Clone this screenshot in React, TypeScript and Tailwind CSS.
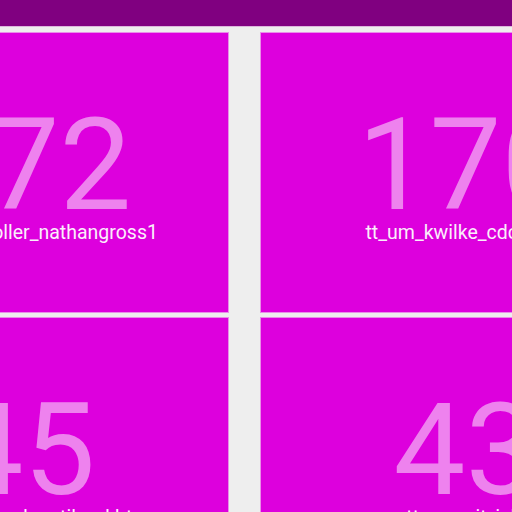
import React from "react";

const cards = [
  { n: "172", name: "tt_um_controller_nathangross1" },
  { n: "170", name: "tt_um_kwilke_cdc_fifos" },
  { n: "45", name: "tt_um_Crossbar_tiles_kbt" },
  { n: "43", name: "tt_um_pit_jelli" },
];

export default function App() {
  return (
    <div
      className="h-screen w-screen overflow-hidden bg-[#eeeeee]"
      style={{ fontFamily: "Roboto, 'Noto Sans', sans-serif" }}
    >
      <div className="h-[26px] bg-[#800080] shadow-[0_1px_0_#dcb6dc]" />
      <div className="ml-[-181px] grid w-max grid-cols-[409px_409px] gap-x-[33px] gap-y-[6px] pt-[7px]">
        {cards.map((c) => (
          <div
            key={c.n}
            className="flex h-[279px] flex-col items-center bg-[#dd00dd] pt-[79px] shadow-[0_0_0_1px_#e98ee9]"
          >
            <div className="text-[128px] font-normal leading-[106px] text-[#ee82ee]">{c.n}</div>
            <div className="mt-px whitespace-nowrap text-[19.5px] leading-[28px] text-[#fbeefb]">
              {c.name}
            </div>
          </div>
        ))}
      </div>
    </div>
  );
}
